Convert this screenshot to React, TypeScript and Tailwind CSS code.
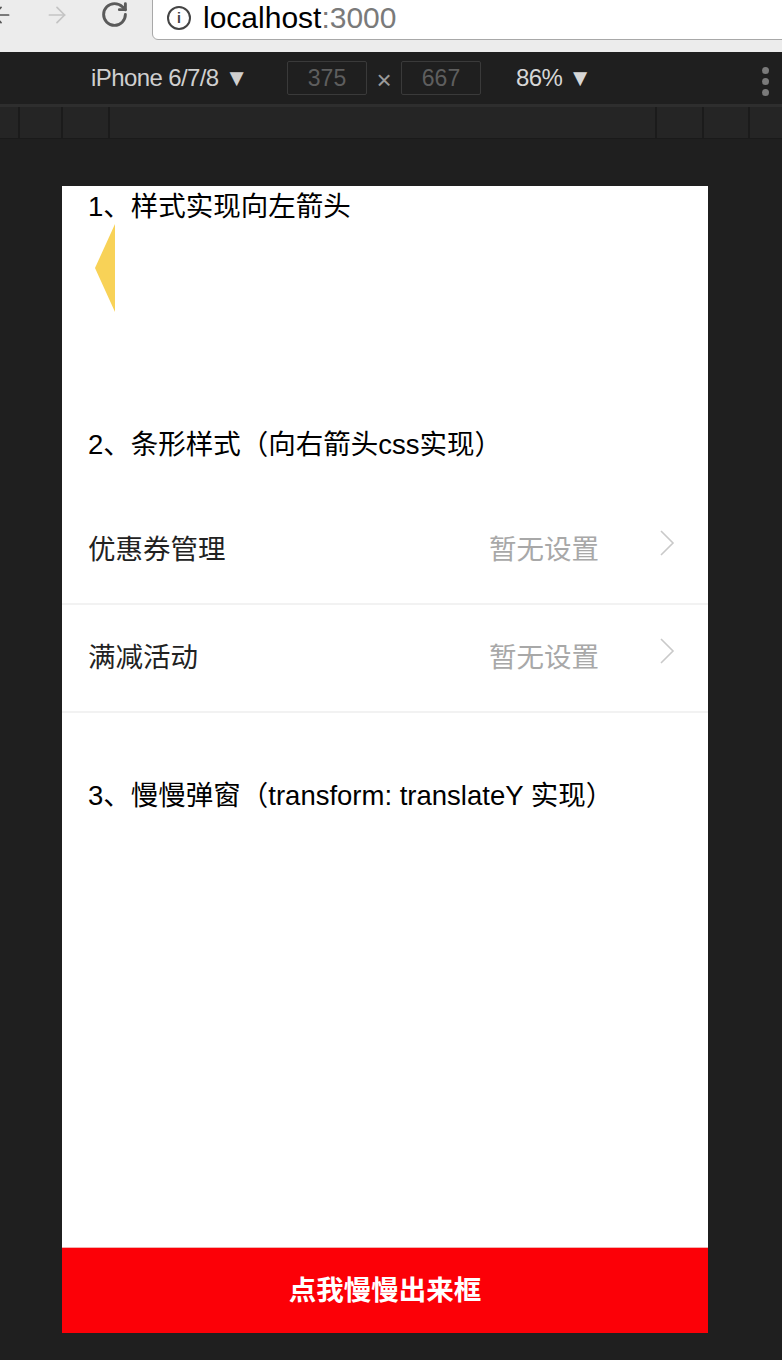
import { RotateCw, ArrowLeft, ArrowRight } from 'lucide-react';

const font = { fontFamily: '"Liberation Sans", "Noto Sans CJK SC", sans-serif' };

function BrowserBar() {
  return (
    <div className="relative h-[52px] bg-[#ececec] shrink-0">
      <ArrowLeft className="absolute left-[-12px] top-[2px] w-[26px] h-[26px] text-[#555]" strokeWidth={1.6} />
      <ArrowRight className="absolute left-[44px] top-[2px] w-[26px] h-[26px] text-[#c4c4c4]" strokeWidth={1.6} />
      <RotateCw className="absolute left-[100px] top-[0px] w-[29px] h-[29px] text-[#5a5a5a]" strokeWidth={2.4} />
      <div className="absolute left-[152px] top-[-2px] right-[-10px] h-[42px] bg-white border border-[#a8a8a8] rounded-bl-[6px] flex items-start pt-[4px] pl-[14px] gap-[12px]">
        <div className="mt-[3px] w-[24px] h-[24px] rounded-full border-[2.5px] border-[#444] flex items-center justify-center text-[14px] font-bold text-[#444] leading-none">i</div>
        <span className="text-[30px] leading-[30px] text-black">
          localhost<span className="text-[#7a7a7a]">:3000</span>
        </span>
      </div>
    </div>
  );
}

function DevToolbar() {
  return (
    <div className="shrink-0">
      <div className="h-[52px] bg-[#1f1f1f] flex items-center relative">
        <span className="ml-[91px] w-[196px] text-[24px] text-[#cfcfcf] tracking-[-0.6px]">iPhone 6/7/8 ▼</span>
        <div className="w-[80px] h-[34px] border border-[#3a3a3a] rounded-[2px] flex items-center justify-center text-[23px] text-[#5e5e5e]">375</div>
        <span className="w-[34px] text-center text-[26px] text-[#9a9a9a] mt-[4px]">×</span>
        <div className="w-[80px] h-[34px] border border-[#3a3a3a] rounded-[2px] flex items-center justify-center text-[23px] text-[#5e5e5e]">667</div>
        <span className="ml-[35px] text-[24px] text-[#d6d6d6] tracking-[-0.6px]">86% ▼</span>
        <div className="absolute left-[762px] top-[15px] flex flex-col gap-[4px]">
          <div className="w-[7px] h-[7px] rounded-full bg-[#7a7a7a]" />
          <div className="w-[7px] h-[7px] rounded-full bg-[#7a7a7a]" />
          <div className="w-[7px] h-[7px] rounded-full bg-[#7a7a7a]" />
        </div>
      </div>
      <div className="h-[3px] bg-[#2e2e2e]" />
      <div className="h-[32px] bg-[#252525] flex border-b border-[#1a1a1a]">
        <div className="w-[20px] border-r-2 border-[#1b1b1b]" />
        <div className="w-[43px] border-r-2 border-[#1b1b1b]" />
        <div className="w-[47px] border-r-2 border-[#1b1b1b]" />
        <div className="w-[547px] border-r-2 border-[#1b1b1b]" />
        <div className="w-[47px] border-r-2 border-[#1b1b1b]" />
        <div className="w-[46px] border-r-2 border-[#1b1b1b]" />
        <div className="flex-1" />
      </div>
    </div>
  );
}

function Chevron() {
  return (
    <svg width="16" height="26" viewBox="0 0 16 26" className="mt-[-14px]">
      <polyline points="2,1 14,13 2,25" fill="none" stroke="#c9c9c9" strokeWidth="1.6" />
    </svg>
  );
}

function Row({ label }: { label: string }) {
  return (
    <div className="h-[108px] flex items-center border-b-2 border-[#f2f2f2] pl-[26px] pr-[33px]">
      <span className="flex-1 text-[27.5px] text-[#222]">{label}</span>
      <span className="text-[27.5px] text-[#a8a8a8] mr-[60px]">暂无设置</span>
      <Chevron />
    </div>
  );
}

export default function App() {
  return (
    <div className="w-[782px] h-[1360px] bg-[#1f1f1f] flex flex-col overflow-hidden" style={font}>
      <BrowserBar />
      <DevToolbar />
      <div className="h-[47px] shrink-0" />
      <div className="ml-[62px] w-[646px] h-[1147px] bg-white flex flex-col shrink-0">
        <div className="h-[38px] leading-[42px] pl-[26px] text-[27.5px] text-black">1、样式实现向左箭头</div>
        <div className="ml-[33px] w-0 h-0 border-y-[44px] border-y-transparent border-r-[20px] border-r-[#f8d257]" />
        <div className="mt-[112px] h-[42px] leading-[42px] pl-[26px] text-[27.5px] text-black">2、条形样式（向右箭头css实现）</div>
        <div className="mt-[31px]">
          <Row label="优惠券管理" />
          <Row label="满减活动" />
        </div>
        <div className="mt-[62px] h-[42px] leading-[42px] pl-[26px] text-[27.5px] text-black">3、慢慢弹窗（transform: translateY 实现）</div>
        <button className="mt-auto h-[86px] bg-[#fc0007] text-white text-[27.5px] font-bold flex items-center justify-center border-t border-[#f3b0b0]">
          点我慢慢出来框
        </button>
      </div>
    </div>
  );
}
